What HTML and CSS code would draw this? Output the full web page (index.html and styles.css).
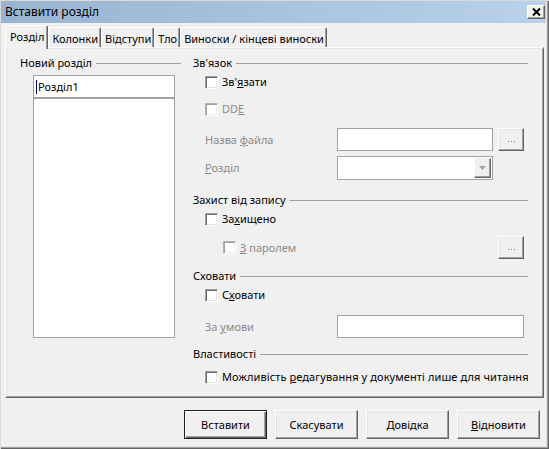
FILE: index.html
```html
<!DOCTYPE html>
<html lang="uk">
<head>
<meta charset="utf-8">
<title>Вставити розділ</title>
<link rel="stylesheet" href="styles.css">
</head>
<body>
<div class="window">
  <div class="titlebar">
    <span class="title">Вставити розділ</span>
    <span class="close"><svg width="9" height="8" viewBox="0 0 9 8"><path d="M1 0.5 L8 7.5 M8 0.5 L1 7.5" stroke="#000" stroke-width="2"/></svg></span>
  </div>
  <div class="tabs">
    <div class="tab active">Розділ</div>
    <div class="tab">Колонки</div>
    <div class="tab">Відступи</div>
    <div class="tab">Тло</div>
    <div class="tab">Виноски / кінцеві виноски</div>
  </div>
  <div class="panel">
    <div class="lcol">
      <div class="hdr"><span>Новий розділ</span><i class="rule"></i></div>
      <div class="namefield"><span class="caret"></span>Розділ1</div>
      <div class="listbox"></div>
    </div>
    <div class="rcol">
      <div class="hdr"><span>Зв'язок</span><i class="rule"></i></div>
      <div class="cb r-link"><span class="box"></span><span>Зв'<u>я</u>зати</span></div>
      <div class="cb off r-dde"><span class="box"></span><span>DD<u>E</u></span></div>
      <div class="field off r-file">
        <span>Назва <u>ф</u>айла</span>
        <span class="input"></span>
        <span></span>
        <span class="dots"><svg width="7" height="1" viewBox="0 0 7 1"><rect x="0" width="1" height="1" fill="#777"/><rect x="3" width="1" height="1" fill="#777"/><rect x="6" width="1" height="1" fill="#777"/></svg></span>
      </div>
      <div class="field off r-sect">
        <span><u>Р</u>озділ</span>
        <span class="combo"><span class="combo-btn"><svg width="7" height="4" viewBox="0 0 7 4"><polygon points="0,0 7,0 3.5,4" fill="#a0a0a0"/></svg></span></span>
      </div>
      <div class="hdr r-prot"><span>Захист від запису</span><i class="rule"></i></div>
      <div class="cb r-protcb"><span class="box"></span><span>За<u>х</u>ищено</span></div>
      <div class="cb off sub r-pass"><span class="box"></span><span><u>З</u> паролем</span>
        <span class="dots"><svg width="7" height="1" viewBox="0 0 7 1"><rect x="0" width="1" height="1" fill="#777"/><rect x="3" width="1" height="1" fill="#777"/><rect x="6" width="1" height="1" fill="#777"/></svg></span>
      </div>
      <div class="hdr r-hide"><span>Сховати</span><i class="rule"></i></div>
      <div class="cb r-hidecb"><span class="box"></span><span>С<u>х</u>овати</span></div>
      <div class="field off r-cond">
        <span>За <u>у</u>мови</span>
        <span class="input wide"></span>
      </div>
      <div class="hdr r-props"><span>Властивості</span><i class="rule"></i></div>
      <div class="cb r-propcb"><span class="box"></span><span class="longlabel">Можливість <u>р</u>едагування у документі лише для читання</span></div>
    </div>
  </div>
  <div class="footer">
    <button class="btn default">Вставити</button>
    <button class="btn">Скасувати</button>
    <button class="btn"><u>Д</u>овідка</button>
    <button class="btn"><u>В</u>ідновити</button>
  </div>
</div>
</body>
</html>
```
FILE: styles.css
```css
* { box-sizing: border-box; }
html, body { margin: 0; padding: 0; }
body {
  width: 549px;
  height: 449px;
  overflow: hidden;
  background: #f0f0f0;
  font-family: "Noto Sans", "DejaVu Sans", sans-serif;
  font-size: 11px;
  color: #000;
}
u { text-underline-offset: 1px; }

.window {
  width: 549px;
  height: 449px;
  display: flex;
  flex-direction: column;
  padding: 1px 3px 2px 1px;
  background: #f0f0f0;
  box-shadow: inset 1px 1px #dadada, inset -1px -1px #646464, inset -2px -2px #a0a0a0, inset -3px -3px #e3e3e3;
}

.titlebar {
  flex: none;
  height: 22px;
  display: flex;
  align-items: center;
  justify-content: space-between;
  padding: 0 1px 0 4px;
  background: linear-gradient(to right, #99b4d1, #b9d1ea);
}
.title { font-size: 12px; line-height: 16px; }
.close {
  width: 18px;
  height: 14px;
  display: flex;
  align-items: center;
  justify-content: center;
  background: #f0f0f0;
  border: 1px solid;
  border-color: #fff #646464 #646464 #fff;
  box-shadow: inset -1px -1px #a0a0a0;
}
.close svg { display: block; }

.tabs {
  flex: none;
  height: 24px;
  display: flex;
  align-items: flex-end;
  padding-left: 4px;
  position: relative;
  z-index: 1;
}
.tab {
  height: 20px;
  padding: 3px 2px 0 3px;
  line-height: 16px;
  white-space: nowrap;
  border: 1px solid;
  border-bottom: none;
  border-color: #fff #646464 transparent #fff;
  border-radius: 2px 2px 0 0;
  box-shadow: inset -1px 0 #a0a0a0;
}
.tab.active {
  height: 24px;
  margin-bottom: -2px;
  padding: 3px 3px 0 4px;
  background: #f0f0f0;
}

.panel {
  flex: none;
  height: 351px;
  margin: 0 2px 0 4px;
  display: flex;
  gap: 12px;
  padding: 7px 15px 0 14px;
  border: 1px solid;
  border-color: #fff #646464 #646464 #fff;
  box-shadow: inset 1px 1px #e3e3e3, inset -1px -1px #a0a0a0;
}

.hdr {
  display: flex;
  align-items: center;
  height: 16px;
  line-height: 16px;
  white-space: nowrap;
}
.rule {
  flex: 1;
  height: 1px;
  margin-left: 4px;
  background: #a0a0a0;
}

.lcol {
  width: 161px;
  flex: none;
  display: flex;
  flex-direction: column;
}
.namefield {
  margin: 4px 0 0 13px;
  width: 142px;
  height: 23px;
  display: flex;
  align-items: center;
  padding-left: 2px;
  line-height: 16px;
  background: #fff;
  border: 1px solid #a0a0a0;
}
.caret {
  width: 1px;
  height: 14px;
  margin-right: 1px;
  background: #000050;
}
.listbox {
  margin-left: 13px;
  width: 142px;
  height: 240px;
  background: #fff;
  border: 1px solid #a0a0a0;
}

.rcol {
  flex: 1;
  min-width: 0;
  display: flex;
  flex-direction: column;
}
.cb {
  display: flex;
  align-items: center;
  height: 16px;
  line-height: 16px;
  padding-left: 12px;
  white-space: nowrap;
  overflow: hidden;
}
.longlabel { letter-spacing: 0.1px; }
.box {
  flex: none;
  width: 13px;
  height: 13px;
  margin-right: 4px;
  background: #fff;
  border: 1px solid;
  border-color: #a0a0a0 #fff #fff #a0a0a0;
  box-shadow: inset 1px 1px #696969, inset -1px -1px #e3e3e3;
}
.off { color: #8a8a8a; }
.off .box {
  border-color: #b4b4b4 #fff #fff #b4b4b4;
  box-shadow: inset 1px 1px #a0a0a0, inset -1px -1px #ececec;
}
.sub {
  padding-left: 30px;
  padding-right: 4px;
  height: 23px;
}
.sub .dots { margin-left: auto; }

.field {
  display: grid;
  grid-template-columns: 132px 156px 5px 26px;
  align-items: center;
  height: 23px;
  line-height: 16px;
  padding-left: 12px;
}
.input {
  height: 23px;
  background: #fff;
  border: 1px solid #a0a0a0;
}
.input.wide { grid-column: span 3; }
.dots {
  width: 26px;
  height: 23px;
  display: flex;
  align-items: flex-end;
  justify-content: center;
  padding-bottom: 8px;
  background: #f0f0f0;
  border: 1px solid;
  border-color: #fff #646464 #646464 #fff;
  box-shadow: inset -1px -1px #a0a0a0, inset 1px 1px #e3e3e3;
}
.dots svg { display: block; }
.combo {
  height: 24px;
  display: flex;
  justify-content: flex-end;
  padding: 1px;
  background: #fff;
  border: 1px solid #a0a0a0;
}
.combo-btn {
  width: 17px;
  display: flex;
  align-items: center;
  justify-content: center;
  background: #f0f0f0;
  border: 1px solid;
  border-color: #f0f0f0 #646464 #646464 #fff;
  box-shadow: inset -1px -1px #a0a0a0;
}
.combo-btn svg { display: block; }

.r-link { margin-top: 3px; }
.r-dde { margin-top: 11px; }
.r-file { margin-top: 11px; }
.r-sect { margin-top: 5px; height: 24px; }
.r-prot { margin-top: 12px; }
.r-protcb { margin-top: 3px; }
.r-pass { margin-top: 9px; }
.r-hide { margin-top: 9px; }
.r-hidecb { margin-top: 3px; }
.r-cond { margin-top: 12px; }
.r-props { margin-top: 8px; }
.r-propcb { margin-top: 7px; }

.footer {
  flex: 1;
  display: flex;
  justify-content: flex-end;
  align-items: flex-start;
  gap: 8px;
  padding: 12px 6px 0 0;
}
.btn {
  width: 83px;
  height: 29px;
  padding: 0;
  font: inherit;
  color: #000;
  background: #f0f0f0;
  border: 1px solid;
  border-color: #fff #646464 #646464 #fff;
  box-shadow: inset -1px -1px #a0a0a0, inset 1px 1px #e3e3e3;
}
.btn.default {
  border-color: #1e1e1e;
  box-shadow: inset 1px 1px #fff, inset -1px -1px #646464, inset -2px -2px #a0a0a0;
}
```
